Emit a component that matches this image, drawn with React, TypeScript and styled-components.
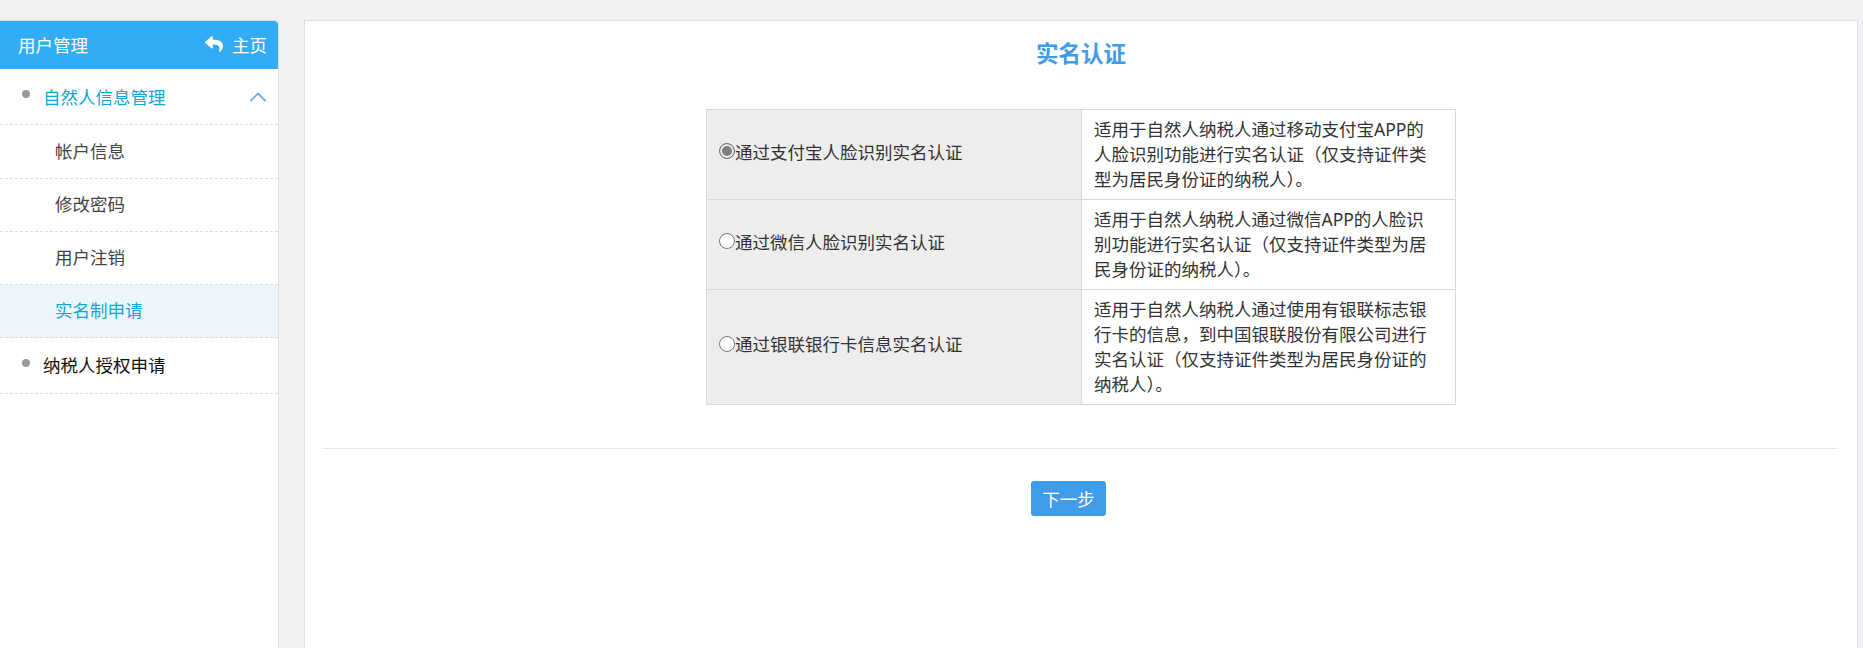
import React from "react";
import styled, { createGlobalStyle } from "styled-components";
import { FaReply } from "react-icons/fa";
import { FiChevronUp } from "react-icons/fi";

const Global = createGlobalStyle`
  html, body { margin: 0; padding: 0; height: 100%; overflow: hidden; }
  body { background: #f0f1f3; font-family: "Noto Sans", "Noto Sans CJK SC", sans-serif; font-size: 17.5px; color: #333; }
  #root { height: 100%; }
`;

const Page = styled.div`
  display: flex;
  align-items: stretch;
  height: 648px;
  padding: 20px 5px 0 0;
  box-sizing: border-box;
  gap: 25px;
`;

const Sidebar = styled.aside`
  width: 279px;
  flex: none;
  box-sizing: border-box;
  background: #fff;
  border-top: 1px solid #dcdfe3;
  border-right: 1px solid #dcdfe3;
  border-top-right-radius: 4px;
`;

const SideHeader = styled.div`
  height: 48px;
  background: #33acf6;
  border-top-right-radius: 4px;
  color: #fff;
  display: flex;
  align-items: center;
  justify-content: space-between;
  padding: 0 11px 2px 18px;
  box-sizing: border-box;
`;

const HomeLink = styled.span`
  display: flex;
  align-items: center;
  gap: 9px;
`;

const GroupRow = styled.div<{ $open?: boolean; $height: number }>`
  height: ${(p) => p.$height}px;
  box-sizing: border-box;
  border-bottom: 1px dashed #dddddd;
  display: flex;
  align-items: center;
  padding: 0 6px 0 22px;
  color: ${(p) => (p.$open ? "#0aa8d8" : "#111")};
`;

const Dot = styled.span`
  width: 8px;
  height: 8px;
  border-radius: 50%;
  background: #9a9a9e;
  margin-right: 13px;
  position: relative;
  top: -3px;
`;

const GroupLabel = styled.span<{ $raise?: number }>`
  flex: 1;
  margin-bottom: ${(p) => p.$raise ?? 0}px;
`;

const SubRow = styled.div<{ $active?: boolean; $height: number }>`
  height: ${(p) => p.$height}px;
  box-sizing: border-box;
  border-bottom: 1px dashed #dddddd;
  display: flex;
  align-items: center;
  padding: 0 0 3px 55px;
  background: ${(p) => (p.$active ? "#edf5fc" : "#fff")};
  color: ${(p) => (p.$active ? "#0aa8d8" : "#444")};
`;

const Main = styled.main`
  flex: 1;
  box-sizing: border-box;
  background: #fff;
  border: 1px solid #dcdfe3;
  border-bottom: 0;
  padding: 16px 20px 0 18px;
`;

const Title = styled.h1`
  margin: 0 0 38px;
  padding-left: 2px;
  text-align: center;
  font-size: 22.5px;
  line-height: 34px;
  font-weight: 700;
  color: #3f9ce8;
`;

const OptionTable = styled.table`
  width: 750px;
  margin: 0 0 0 383px;
  border-collapse: collapse;
  table-layout: fixed;
  line-height: 25px;
`;

const ChoiceCell = styled.td`
  width: 375px;
  box-sizing: border-box;
  background: #ededed;
  border: 1px solid #d9d9d9;
  padding: 0 0 5px 12px;
  color: #333;
  vertical-align: middle;
`;

const DescCell = styled.td`
  border: 1px solid #d9d9d9;
  padding: 7px 25px 7px 12px;
  color: #333;
`;

const Choice = styled.label`
  display: flex;
  align-items: center;
`;

const Radio = styled.input`
  appearance: none;
  width: 16px;
  height: 16px;
  margin: 0;
  flex: none;
  box-sizing: border-box;
  border: 1px solid #767676;
  border-radius: 50%;
  background: #fff;
  position: relative;
  top: -1px;
  &:checked {
    background: #7f7f7f;
    box-shadow: inset 0 0 0 2px #ededed;
  }
`;

const Divider = styled.hr`
  border: 0;
  border-top: 1px solid #e5e5e5;
  margin: 43px 0 32px;
`;

const Actions = styled.div`
  display: flex;
  justify-content: center;
`;

const NextButton = styled.button`
  width: 75px;
  height: 35px;
  margin-right: 23px;
  padding: 0;
  border: 0;
  border-radius: 3px;
  background: #3f9ce8;
  color: #fff;
  font: inherit;
`;

const options = [
  { label: "通过支付宝人脸识别实名认证", desc: "适用于自然人纳税人通过移动支付宝APP的人脸识别功能进行实名认证（仅支持证件类型为居民身份证的纳税人）。", checked: true },
  { label: "通过微信人脸识别实名认证", desc: "适用于自然人纳税人通过微信APP的人脸识别功能进行实名认证（仅支持证件类型为居民身份证的纳税人）。" },
  { label: "通过银联银行卡信息实名认证", desc: "适用于自然人纳税人通过使用有银联标志银行卡的信息，到中国银联股份有限公司进行实名认证（仅支持证件类型为居民身份证的纳税人）。" },
];

export default function App() {
  return (
    <>
      <Global />
      <Page>
        <Sidebar>
          <SideHeader>
            <span>用户管理</span>
            <HomeLink><FaReply size={18} />主页</HomeLink>
          </SideHeader>
          <GroupRow $open $height={56}>
            <Dot />
            <GroupLabel>自然人信息管理</GroupLabel>
            <FiChevronUp size={28} strokeWidth={1.6} color="#6db3d8" />
          </GroupRow>
          <SubRow $height={54}>帐户信息</SubRow>
          <SubRow $height={53}>修改密码</SubRow>
          <SubRow $height={53}>用户注销</SubRow>
          <SubRow $active $height={53}>实名制申请</SubRow>
          <GroupRow $height={56}>
            <Dot />
            <GroupLabel $raise={3}>纳税人授权申请</GroupLabel>
          </GroupRow>
        </Sidebar>
        <Main>
          <Title>实名认证</Title>
          <OptionTable>
            <tbody>
              {options.map((o) => (
                <tr key={o.label}>
                  <ChoiceCell>
                    <Choice>
                      <Radio type="radio" name="way" defaultChecked={o.checked} />
                      {o.label}
                    </Choice>
                  </ChoiceCell>
                  <DescCell>{o.desc}</DescCell>
                </tr>
              ))}
            </tbody>
          </OptionTable>
          <Divider />
          <Actions>
            <NextButton>下一步</NextButton>
          </Actions>
        </Main>
      </Page>
    </>
  );
}
